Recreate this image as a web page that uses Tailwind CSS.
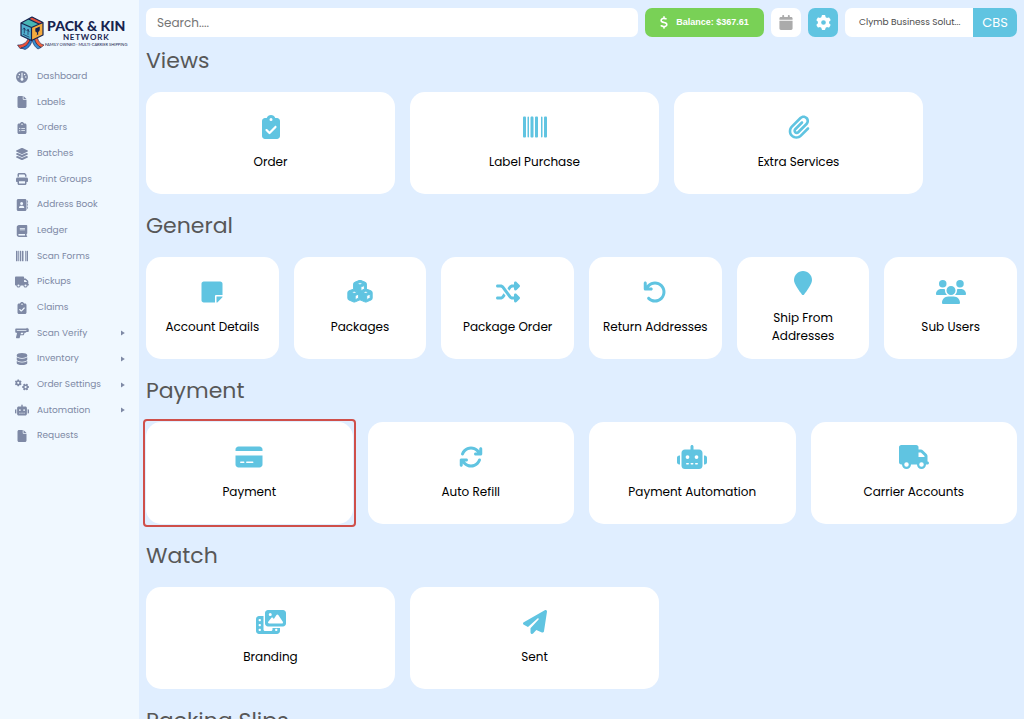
<!DOCTYPE html>
<html lang="en">
<head>
  <meta charset="UTF-8" />
  <meta name="viewport" content="width=device-width, initial-scale=1.0"/>
  <title>Settings - Pack &amp; Kin Network</title>
  <script src="https://cdn.jsdelivr.net/npm/@tailwindcss/browser@4"></script>
</head>
<body class="flex h-screen overflow-hidden bg-[#e0eeff] font-[Poppins,Inter,sans-serif] text-black">

  <!-- Icons -->
  <svg class="hidden" aria-hidden="true">
    <symbol id="gauge" viewBox="0 0 512 512"><path fill-rule="evenodd" d="M0 256a256 256 0 1 1 512 0A256 256 0 1 1 0 256zM256 416c35.3 0 64-28.7 64-64c0-26.9-16.5-49.9-40-59.3V88c0-13.3-10.7-24-24-24s-24 10.7-24 24V292.7c-23.5 9.5-40 32.5-40 59.3c0 35.3 28.7 64 64 64zM144 176a32 32 0 1 0 0-64 32 32 0 1 0 0 64zm-16 80a32 32 0 1 0 -64 0 32 32 0 1 0 64 0zm288 32a32 32 0 1 0 0-64 32 32 0 1 0 0 64zM400 144a32 32 0 1 0 -64 0 32 32 0 1 0 64 0z"/></symbol>
    <symbol id="file" viewBox="0 0 384 512"><path d="M0 64C0 28.7 28.7 0 64 0H224V128c0 17.7 14.3 32 32 32H384V448c0 35.3-28.7 64-64 64H64c-35.3 0-64-28.7-64-64V64zm384 64H256V0L384 128z"/></symbol>
    <symbol id="clipboard-list" viewBox="0 0 384 512"><path fill-rule="evenodd" d="M192 0c-41.8 0-77.4 26.7-90.5 64H64C28.7 64 0 92.7 0 128V448c0 35.3 28.7 64 64 64H320c35.3 0 64-28.7 64-64V128c0-35.3-28.7-64-64-64H282.5C269.4 26.7 233.8 0 192 0zm0 64a32 32 0 1 1 0 64 32 32 0 1 1 0-64zM72 272a24 24 0 1 1 48 0 24 24 0 1 1 -48 0zm104-16H304c8.8 0 16 7.2 16 16s-7.2 16-16 16H176c-8.8 0-16-7.2-16-16s7.2-16 16-16zM72 368a24 24 0 1 1 48 0 24 24 0 1 1 -48 0zM176 352H304c8.8 0 16 7.2 16 16s-7.2 16-16 16H176c-8.8 0-16-7.2-16-16s7.2-16 16-16z"/></symbol>
    <symbol id="clipboard-check" viewBox="0 0 384 512"><path fill-rule="evenodd" d="M192 0c-41.8 0-77.4 26.7-90.5 64H64C28.7 64 0 92.7 0 128V448c0 35.3 28.7 64 64 64H320c35.3 0 64-28.7 64-64V128c0-35.3-28.7-64-64-64H282.5C269.4 26.7 233.8 0 192 0zm0 64a32 32 0 1 1 0 64 32 32 0 1 1 0-64zM305 273L177 401c-9.4 9.4-24.6 9.4-33.9 0L79 337c-9.4-9.4-9.4-24.6 0-33.9s24.6-9.4 33.9 0l47 47L271 239c9.4-9.4 24.6-9.4 33.9 0s9.4 24.6 0 33.9z"/></symbol>
    <symbol id="layers" viewBox="0 0 576 512"><path d="M264.5 5.2c14.9-6.9 32.1-6.9 47 0l218.6 101c8.5 3.9 13.9 12.4 13.9 21.8s-5.4 17.9-13.9 21.8l-218.6 101c-14.9 6.9-32.1 6.9-47 0L45.9 149.8C37.4 145.8 32 137.3 32 128s5.4-17.9 13.9-21.8L264.5 5.2zM476.9 209.6l53.2 24.6c8.5 3.9 13.9 12.4 13.9 21.8s-5.4 17.9-13.9 21.8l-218.6 101c-14.9 6.9-32.1 6.9-47 0L45.9 277.8C37.4 273.8 32 265.3 32 256s5.4-17.9 13.9-21.8l53.2-24.6 152 70.2c23.4 10.8 50.4 10.8 73.8 0l152-70.2zm-152 198.2l152-70.2 53.2 24.6c8.5 3.9 13.9 12.4 13.9 21.8s-5.4 17.9-13.9 21.8l-218.6 101c-14.9 6.9-32.1 6.9-47 0L45.9 405.8C37.4 401.8 32 393.3 32 384s5.4-17.9 13.9-21.8l53.2-24.6 152 70.2c23.4 10.8 50.4 10.8 73.8 0z"/></symbol>
    <symbol id="print" viewBox="0 0 512 512"><path fill-rule="evenodd" d="M128 0C92.7 0 64 28.7 64 64v96h64V64H354.7L384 93.3V160h64V93.3c0-17-6.7-33.3-18.7-45.3L400 18.7C388 6.7 371.7 0 354.7 0H128zM384 352v96H128V352H384zm64 32h32c17.7 0 32-14.3 32-32V256c0-35.3-28.7-64-64-64H64c-35.3 0-64 28.7-64 64v96c0 17.7 14.3 32 32 32H64v64c0 35.3 28.7 64 64 64H384c35.3 0 64-28.7 64-64V384z"/></symbol>
    <symbol id="address-book" viewBox="0 0 512 512"><path fill-rule="evenodd" d="M96 0C60.7 0 32 28.7 32 64V448c0 35.3 28.7 64 64 64H384c35.3 0 64-28.7 64-64V64c0-35.3-28.7-64-64-64H96zM208 288h64c44.2 0 80 35.8 80 80c0 8.8-7.2 16-16 16H144c-8.8 0-16-7.2-16-16c0-44.2 35.8-80 80-80zm-32-96a64 64 0 1 1 128 0 64 64 0 1 1 -128 0zM512 80c0-8.8-7.2-16-16-16s-16 7.2-16 16v64c0 8.8 7.2 16 16 16s16-7.2 16-16V80zM496 192c-8.8 0-16 7.2-16 16v64c0 8.8 7.2 16 16 16s16-7.2 16-16V208c0-8.8-7.2-16-16-16zm16 144c0-8.8-7.2-16-16-16s-16 7.2-16 16v64c0 8.8 7.2 16 16 16s16-7.2 16-16V336z"/></symbol>
    <symbol id="book" viewBox="0 0 448 512"><path fill-rule="evenodd" d="M96 0C43 0 0 43 0 96V416c0 53 43 96 96 96H416c17.7 0 32-14.3 32-32s-14.3-32-32-32V384c17.7 0 32-14.3 32-32V32c0-17.7-14.3-32-32-32H96zm0 384H352v64H96c-17.7 0-32-14.3-32-32s14.3-32 32-32zm32-240c0-8.8 7.2-16 16-16H336c8.8 0 16 7.2 16 16s-7.2 16-16 16H144c-8.8 0-16-7.2-16-16zm16 48H336c8.8 0 16 7.2 16 16s-7.2 16-16 16H144c-8.8 0-16-7.2-16-16s7.2-16 16-16z"/></symbol>
    <symbol id="barcode" viewBox="0 0 512 512"><path d="M24 32C10.7 32 0 42.7 0 56V456c0 13.3 10.7 24 24 24H40c13.3 0 24-10.7 24-24V56c0-13.3-10.7-24-24-24H24zm88 0c-8.8 0-16 7.2-16 16V464c0 8.8 7.2 16 16 16s16-7.2 16-16V48c0-8.8-7.2-16-16-16zm72 0c-13.3 0-24 10.7-24 24V456c0 13.3 10.7 24 24 24h16c13.3 0 24-10.7 24-24V56c0-13.3-10.7-24-24-24H184zm96 0c-13.3 0-24 10.7-24 24V456c0 13.3 10.7 24 24 24h16c13.3 0 24-10.7 24-24V56c0-13.3-10.7-24-24-24H280zM448 56V456c0 13.3 10.7 24 24 24h16c13.3 0 24-10.7 24-24V56c0-13.3-10.7-24-24-24H472c-13.3 0-24 10.7-24 24zm-64-8V464c0 8.8 7.2 16 16 16s16-7.2 16-16V48c0-8.8-7.2-16-16-16s-16 7.2-16 16z"/></symbol>
    <symbol id="truck" viewBox="0 0 640 512"><path fill-rule="evenodd" d="M48 0C21.5 0 0 21.5 0 48V368c0 26.5 21.5 48 48 48H64c0 53 43 96 96 96s96-43 96-96H384c0 53 43 96 96 96s96-43 96-96h32c17.7 0 32-14.3 32-32s-14.3-32-32-32V237.3c0-17-6.7-33.3-18.7-45.3L512 114.7c-12-12-28.3-18.7-45.3-18.7H416V48c0-26.5-21.5-48-48-48H48zM416 160h50.7L544 237.3V256H416V160zM112 416a48 48 0 1 1 96 0 48 48 0 1 1 -96 0zm368-48a48 48 0 1 1 0 96 48 48 0 1 1 0-96z"/></symbol>
    <symbol id="gun" viewBox="0 0 576 512"><path fill-rule="evenodd" d="M528 56c0-13.3-10.7-24-24-24s-24 10.7-24 24v8H32C14.3 64 0 78.3 0 96V208c0 17.7 14.3 32 32 32H42c20.8 0 36.1 19.6 31 39.8L33 440.2c-2.4 9.6-.2 19.7 5.8 27.5S54.1 480 64 480h96c14.7 0 27.5-10 31-24.2L217 352H321.4c23.7 0 44.8-14.9 52.7-37.2L400.9 240H432c8.5 0 16.6-3.4 22.6-9.4L477.3 208H544c17.7 0 32-14.3 32-32V96c0-17.7-14.3-32-32-32H528V56zM321.4 304H229l16-64h105l-21 58.7c-1.1 3.2-4.2 5.3-7.6 5.3zM80 128H464c8.8 0 16 7.2 16 16s-7.2 16-16 16H80c-8.8 0-16-7.2-16-16s7.2-16 16-16z"/></symbol>
    <symbol id="database" viewBox="0 0 448 512"><path d="M448 80v48c0 44.2-100.3 80-224 80S0 172.2 0 128V80C0 35.8 100.3 0 224 0S448 35.8 448 80zM393.2 214.7c20.8-7.4 39.9-16.9 54.8-28.6V288c0 44.2-100.3 80-224 80S0 332.2 0 288V186.1c14.9 11.8 34 21.2 54.8 28.6C99.7 230.7 159.5 240 224 240s124.3-9.3 169.2-25.3zM0 346.1c14.9 11.8 34 21.2 54.8 28.6C99.7 390.7 159.5 400 224 400s124.3-9.3 169.2-25.3c20.8-7.4 39.9-16.9 54.8-28.6V432c0 44.2-100.3 80-224 80S0 476.2 0 432V346.1z"/></symbol>
    <symbol id="gear" viewBox="0 0 512 512"><path id="gear-shape" fill-rule="evenodd" d="M495.9 166.6c3.2 8.7 .5 18.4-6.4 24.6l-43.3 39.4c1.1 8.3 1.7 16.8 1.7 25.4s-.6 17.1-1.7 25.4l43.3 39.4c6.9 6.2 9.6 15.9 6.4 24.6c-4.4 11.9-9.7 23.3-15.8 34.3l-4.7 8.1c-6.6 11-14 21.4-22.1 31.2c-5.9 7.2-15.7 9.6-24.5 6.8l-55.7-17.7c-13.4 10.3-28.2 18.9-44 25.4l-12.5 57.1c-2 9.1-9 16.3-18.2 17.8c-13.8 2.3-28 3.5-42.5 3.5s-28.7-1.2-42.5-3.5c-9.2-1.5-16.2-8.7-18.2-17.8l-12.5-57.1c-15.8-6.5-30.6-15.1-44-25.4L83.1 425.9c-8.8 2.8-18.6 .3-24.5-6.8c-8.1-9.8-15.5-20.2-22.1-31.2l-4.7-8.1c-6.1-11-11.4-22.4-15.8-34.3c-3.2-8.7-.5-18.4 6.4-24.6l43.3-39.4C64.6 273.1 64 264.6 64 256s.6-17.1 1.7-25.4L22.4 191.2c-6.9-6.2-9.6-15.9-6.4-24.6c4.4-11.9 9.7-23.3 15.8-34.3l4.7-8.1c6.6-11 14-21.4 22.1-31.2c5.9-7.2 15.7-9.6 24.5-6.8l55.7 17.7c13.4-10.3 28.2-18.9 44-25.4l12.5-57.1c2-9.1 9-16.3 18.2-17.8C227.3 1.2 241.5 0 256 0s28.7 1.2 42.5 3.5c9.2 1.5 16.2 8.7 18.2 17.8l12.5 57.1c15.8 6.5 30.6 15.1 44 25.4l55.7-17.7c8.8-2.8 18.6-.3 24.5 6.8c8.1 9.8 15.5 20.2 22.1 31.2l4.7 8.1c6.1 11 11.4 22.4 15.8 34.3zM256 336a80 80 0 1 0 0-160 80 80 0 1 0 0 160z"/></symbol>
    <symbol id="gears" viewBox="0 0 640 512"><use href="#gear-shape" transform="translate(-10 0) scale(.62)"/><use href="#gear-shape" transform="translate(324 190) scale(.62) rotate(30 256 256)"/></symbol>
    <symbol id="robot" viewBox="0 0 640 512"><path fill-rule="evenodd" d="M320 0c17.7 0 32 14.3 32 32V96H472c39.8 0 72 32.2 72 72V440c0 39.8-32.2 72-72 72H168c-39.8 0-72-32.2-72-72V168c0-39.8 32.2-72 72-72H288V32c0-17.7 14.3-32 32-32zM208 384c-8.8 0-16 7.2-16 16s7.2 16 16 16h32c8.8 0 16-7.2 16-16s-7.2-16-16-16H208zm96 0c-8.8 0-16 7.2-16 16s7.2 16 16 16h32c8.8 0 16-7.2 16-16s-7.2-16-16-16H304zm96 0c-8.8 0-16 7.2-16 16s7.2 16 16 16h32c8.8 0 16-7.2 16-16s-7.2-16-16-16H400zM264 256a40 40 0 1 0 -80 0 40 40 0 1 0 80 0zm152 40a40 40 0 1 0 0-80 40 40 0 1 0 0 80zM48 224H64V416H48c-26.5 0-48-21.5-48-48V272c0-26.5 21.5-48 48-48zm544 0c26.5 0 48 21.5 48 48v96c0 26.5-21.5 48-48 48H576V224h16z"/></symbol>
    <symbol id="caret" viewBox="0 0 4 6"><path d="M0 0.4L3.8 3L0 5.6z"/></symbol>
    <symbol id="dollar" viewBox="0 0 320 512"><path d="M160 0c17.7 0 32 14.3 32 32V67.7c1.6 .2 3.1 .4 4.7 .7c.4 .1 .7 .1 1.1 .2l48 8.8c17.4 3.2 28.9 19.9 25.7 37.2s-19.9 28.9-37.2 25.7l-47.5-8.7c-31.3-4.6-58.9-1.5-78.3 6.2s-27.2 18.3-29 28.1c-2 10.7-.5 16.7 1.2 20.4c1.8 3.9 5.5 8.3 12.8 13.2c16.3 10.7 41.3 17.7 73.7 26.3l2.9 .8c28.6 7.6 63.6 16.8 89.6 33.8c14.2 9.3 27.6 21.9 35.9 39.5c8.5 17.9 10.3 37.9 6.4 59.2c-6.9 38-33.1 63.4-65.6 76.7c-13.7 5.6-28.6 9.2-44.4 11V480c0 17.7-14.3 32-32 32s-32-14.3-32-32V445.1c-.4-.1-.9-.1-1.3-.2l-.2 0c-24.4-3.8-64.5-14.3-91.5-26.3c-16.1-7.2-23.4-26.1-16.2-42.2s26.1-23.4 42.2-16.2c20.9 9.3 55.3 18.5 75.2 21.6c31.9 4.7 58.2 2 76-5.3c16.9-6.9 24.6-16.9 26.8-28.9c1.9-10.6 .4-16.7-1.3-20.4c-1.9-4-5.6-8.4-13-13.3c-16.4-10.7-41.5-17.7-74-26.3l-2.8-.7C119.4 279.3 84.4 270 58.4 253c-14.2-9.3-27.5-22-35.8-39.6c-8.4-17.9-10.1-37.9-6.1-59.2C23.7 116 52.3 91.2 84.8 78.3c13.3-5.3 27.9-8.9 43.2-11V32c0-17.7 14.3-32 32-32z"/></symbol>
    <symbol id="calendar" viewBox="0 0 448 512"><path d="M96 32V64H48C21.5 64 0 85.5 0 112v48H448V112c0-26.5-21.5-48-48-48H352V32c0-17.7-14.3-32-32-32s-32 14.3-32 32V64H160V32c0-17.7-14.3-32-32-32S96 14.3 96 32zM448 192H0V464c0 26.5 21.5 48 48 48H400c26.5 0 48-21.5 48-48V192z"/></symbol>
    <symbol id="paperclip" viewBox="0 0 448 512"><path d="M364.2 83.8c-24.4-24.4-64-24.4-88.4 0l-184 184c-42.1 42.1-42.1 110.3 0 152.4s110.3 42.1 152.4 0l152-152c10.9-10.9 28.7-10.9 39.6 0s10.9 28.7 0 39.6l-152 152c-64 64-167.6 64-231.6 0s-64-167.6 0-231.6l184-184c46.3-46.3 121.3-46.3 167.6 0s46.3 121.3 0 167.6l-176 176c-28.6 28.6-75 28.6-103.6 0s-28.6-75 0-103.6l144-144c10.9-10.9 28.7-10.9 39.6 0s10.9 28.7 0 39.6l-144 144c-6.7 6.7-6.7 17.7 0 24.4s17.7 6.7 24.4 0l176-176c24.4-24.4 24.4-64 0-88.4z"/></symbol>
    <symbol id="note" viewBox="0 0 448 512"><path d="M312 320h136V80c0-26.5-21.5-48-48-48H48C21.5 32 0 53.5 0 80v352c0 26.5 21.5 48 48 48h240V344c0-13.2 10.8-24 24-24zm129 55l-98 98c-4.5 4.5-10.6 7-17 7h-6V352h128v6.1c0 6.3-2.5 12.4-7 16.9z"/></symbol>
    <symbol id="cubes" viewBox="-24 -10 624 568"><path fill-rule="evenodd" stroke="#60c4e1" stroke-width="24" stroke-linejoin="round" d="M290.8 48.6l78.4 29.7L288 109.5 206.8 78.3l78.4-29.7c1.8-.7 3.8-.7 5.7 0zM136 92.5V204.7c-1.3 .4-2.6 .8-3.9 1.3l-96 36.4C14.4 250.6 0 271.5 0 294.7V413.9c0 22.2 13.1 42.3 33.5 51.3l96 42.2c14.4 6.3 30.7 6.3 45.1 0L288 457.5l113.5 49.9c14.4 6.3 30.7 6.3 45.1 0l96-42.2c20.3-8.9 33.5-29.1 33.5-51.3V294.7c0-23.3-14.4-44.1-36.1-52.4l-96-36.4c-1.3-.5-2.6-.9-3.9-1.3V92.5c0-23.3-14.4-44.1-36.1-52.4l-96-36.4c-12.8-4.8-26.9-4.8-39.7 0l-96 36.4C150.4 48.4 136 69.3 136 92.5zM392 210.6l-82.4 31.2V152.6L392 121v89.6zM154.8 250.9l78.4 29.7L152 311.7 70.8 280.6l78.4-29.7c1.8-.7 3.8-.7 5.7 0zm18.8 204.4V354.8L256 323.2v95.9l-82.4 36.2zM421.2 250.9c1.8-.7 3.8-.7 5.7 0l78.4 29.7L424 311.7l-81.2-31.1 78.4-29.7zM523.2 421.2l-77.6 34.1V354.8L528 323.2v90.7c0 3.2-1.9 6-4.8 7.3z"/></symbol>
    <symbol id="shuffle" viewBox="0 0 512 512"><path d="M403.8 34.4c12-5 25.7-2.2 34.9 6.9l64 64c6 6 9.4 14.1 9.4 22.6s-3.4 16.6-9.4 22.6l-64 64c-9.2 9.2-22.9 11.9-34.9 6.9s-19.8-16.6-19.8-29.6V160H352c-10.1 0-19.6 4.7-25.6 12.8L284 229.3 244 176l31.2-41.6C293.3 110.2 321.8 96 352 96h32V64c0-12.9 7.8-24.6 19.8-29.6zM164 282.7L204 336l-31.2 41.6C154.7 401.8 126.2 416 96 416H32c-17.7 0-32-14.3-32-32s14.3-32 32-32H96c10.1 0 19.6-4.7 25.6-12.8L164 282.7zm274.6 188c-9.2 9.2-22.9 11.9-34.9 6.9s-19.8-16.6-19.8-29.6V416H352c-30.2 0-58.7-14.2-76.8-38.4L121.6 172.8c-6-8.1-15.5-12.8-25.6-12.8H32c-17.7 0-32-14.3-32-32s14.3-32 32-32H96c30.2 0 58.7 14.2 76.8 38.4L326.4 339.2c6 8.1 15.5 12.8 25.6 12.8h32V320c0-12.9 7.8-24.6 19.8-29.6s25.7-2.2 34.9 6.9l64 64c6 6 9.4 14.1 9.4 22.6s-3.4 16.6-9.4 22.6l-64 64z"/></symbol>
    <symbol id="undo" viewBox="0 0 512 512"><path d="M125.7 160H176c17.7 0 32 14.3 32 32s-14.3 32-32 32H48c-17.7 0-32-14.3-32-32V64c0-17.7 14.3-32 32-32s32 14.3 32 32v51.2L97.6 97.6c87.5-87.5 229.3-87.5 316.8 0s87.5 229.3 0 316.8s-229.3 87.5-316.8 0c-12.5-12.5-12.5-32.8 0-45.3s32.8-12.5 45.3 0c62.5 62.5 163.8 62.5 226.3 0s62.5-163.8 0-226.3s-163.8-62.5-226.3 0L125.7 160z"/></symbol>
    <symbol id="pin" viewBox="0 0 384 512"><path d="M384 192c0 87.4-117 243-168.3 307.2c-12.3 15.3-35.1 15.3-47.4 0C117 435 0 279.4 0 192C0 86 86 0 192 0S384 86 384 192z"/></symbol>
    <symbol id="users" viewBox="0 0 640 512"><path d="M144 0a80 80 0 1 1 0 160A80 80 0 1 1 144 0zM512 0a80 80 0 1 1 0 160A80 80 0 1 1 512 0zM0 298.7C0 239.8 47.8 192 106.7 192h42.7c15.9 0 31 3.5 44.6 9.7c-1.3 7.2-1.9 14.7-1.9 22.3c0 38.2 16.8 72.5 43.3 96H21.3C9.6 320 0 310.4 0 298.7zM405.3 320h-.7c26.6-23.5 43.3-57.8 43.3-96c0-7.6-.7-15-1.9-22.3c13.6-6.3 28.7-9.7 44.6-9.7h42.7C592.2 192 640 239.8 640 298.7c0 11.8-9.6 21.3-21.3 21.3H405.3zM224 224a96 96 0 1 1 192 0 96 96 0 1 1-192 0zM128 485.3C128 411.7 187.7 352 261.3 352H378.7C452.3 352 512 411.7 512 485.3c0 14.7-11.9 26.7-26.7 26.7H154.7c-14.7 0-26.7-11.9-26.7-26.7z"/></symbol>
    <symbol id="credit-card" viewBox="0 0 576 512"><path fill-rule="evenodd" d="M64 32C28.7 32 0 60.7 0 96v32H576V96c0-35.3-28.7-64-64-64H64zM576 224H0V416c0 35.3 28.7 64 64 64H512c35.3 0 64-28.7 64-64V224zM112 352h64c8.8 0 16 7.2 16 16s-7.2 16-16 16H112c-8.8 0-16-7.2-16-16s7.2-16 16-16zm112 16c0-8.8 7.2-16 16-16H368c8.8 0 16 7.2 16 16s-7.2 16-16 16H240c-8.8 0-16-7.2-16-16z"/></symbol>
    <symbol id="refresh" viewBox="0 0 512 512"><path d="M105.1 202.6c7.7-21.8 20.2-42.3 37.8-59.8c62.5-62.5 163.8-62.5 226.3 0L386.3 160H352c-17.7 0-32 14.3-32 32s14.3 32 32 32H463.9c17.7 0 32-14.3 32-32V80c0-17.7-14.3-32-32-32s-32 14.3-32 32v35.2L414.4 97.6c-87.5-87.5-229.3-87.5-316.8 0C73.2 122 55.6 150.7 44.8 181.4c-5.9 16.7 2.9 34.9 19.5 40.8s34.9-2.9 40.8-19.5zM39 289.3c-5 1.5-9.8 4.2-13.7 8.2c-4 4-6.7 8.8-8.1 14c-.3 1.2-.6 2.5-.8 3.8c-.3 1.7-.4 3.4-.4 5.1V432c0 17.7 14.3 32 32 32s32-14.3 32-32V396.9l17.6 17.5c87.5 87.4 229.3 87.4 316.7 0c24.4-24.4 42.1-53.1 52.9-83.7c5.9-16.7-2.9-34.9-19.5-40.8s-34.9 2.9-40.8 19.5c-7.7 21.8-20.2 42.3-37.8 59.8c-62.5 62.5-163.8 62.5-226.3 0L125.6 352H160c17.7 0 32-14.3 32-32s-14.3-32-32-32H48.4c-1.6 0-3.2 .1-4.8 .3s-3.1 .5-4.6 1z"/></symbol>
    <symbol id="photo-film" viewBox="0 0 640 512"><path fill-rule="evenodd" d="M256 0H576c35.3 0 64 28.7 64 64V288c0 35.3-28.7 64-64 64H256c-35.3 0-64-28.7-64-64V64c0-35.3 28.7-64 64-64zM476 106.7C471.5 100 464 96 456 96s-15.5 4-20 10.7l-56 84L362.7 169c-4.6-5.7-11.5-9-18.7-9s-14.2 3.3-18.7 9l-64 80c-5.8 7.2-6.9 17.1-2.9 25.4s12.4 13.6 21.6 13.6H552c8.9 0 17-4.9 21.2-12.7s3.7-17.3-1.2-24.6l-96-144zM336 96a32 32 0 1 0 -64 0 32 32 0 1 0 64 0zM64 128h96V416c0 17.7 14.3 32 32 32H320c17.7 0 32-14.3 32-32V384H512v64c0 35.3-28.7 64-64 64H64c-35.3 0-64-28.7-64-64V192c0-35.3 28.7-64 64-64zm8 64c-8.8 0-16 7.2-16 16v16c0 8.8 7.2 16 16 16H88c8.8 0 16-7.2 16-16V208c0-8.8-7.2-16-16-16H72zm0 104c-8.8 0-16 7.2-16 16v16c0 8.8 7.2 16 16 16H88c8.8 0 16-7.2 16-16V312c0-8.8-7.2-16-16-16H72zm0 104c-8.8 0-16 7.2-16 16v16c0 8.8 7.2 16 16 16H88c8.8 0 16-7.2 16-16V416c0-8.8-7.2-16-16-16H72zm336 16v16c0 8.8 7.2 16 16 16h16c8.8 0 16-7.2 16-16V416c0-8.8-7.2-16-16-16H424c-8.8 0-16 7.2-16 16z"/></symbol>
    <symbol id="plane" viewBox="0 0 512 512"><path d="M498.1 5.6c10.1 7 15.4 19.1 13.5 31.2l-64 416c-1.5 9.7-7.4 18.2-16 23s-18.9 5.4-28 1.6L284 427.7l-68.5 74.1c-8.9 9.7-22.9 12.9-35.2 8.1S160 493.2 160 480V396.4c0-4 1.5-7.8 4.2-10.7L331.8 202.8c5.8-6.3 5.6-16-.4-22s-15.7-6.4-22-.7L106 360.8 17.7 316.6C7.1 311.3 .3 300.7 0 288.9s5.9-22.8 16.1-28.7l448-256c10.7-6.1 23.9-5.5 34 1.4z"/></symbol>
  </svg>

  <!-- Sidebar -->
  <aside class="flex w-[139px] shrink-0 flex-col bg-[#f0f8ff] pt-[15px]">
    <a href="#" class="flex items-center pl-4 text-[#17234f]">
      <svg class="h-[35px] w-[29px] shrink-0" viewBox="0 0 29 35" fill="none" stroke-linejoin="round" stroke-linecap="round">
        <path d="M12 24C10 28 7 30 1.5 30L4 33.5C9 33 12.5 30 14 25z" fill="#e8503a" stroke="#17234f" stroke-width=".6"/>
        <path d="M14 25C12 30 9 32 5 33L9 34.5C13.5 32.5 15.5 29 16 25z" fill="#2f7fd0" stroke="#17234f" stroke-width=".6"/>
        <path d="M18 24C19 28 21.5 31 25 32.5L28 30C24 29 22.5 26.5 21.5 23z" fill="#f2643d" stroke="#17234f" stroke-width=".6"/>
        <path d="M16 25C17 29.5 19.5 32.5 22 34L25 32.5C21 30.5 19.5 28 18.5 24z" fill="#3a8fd0" stroke="#17234f" stroke-width=".6"/>
        <path d="M5 8L15.5 12.5V25.5L5 20.5z" fill="#4fb0cf"/>
        <path d="M15.5 12.5L27 7.5V20L15.5 25.5z" fill="#f5ab3e"/>
        <path d="M5 8L16 2L27 7.5L15.5 12.5z" fill="#47b5b4"/>
        <path d="M13 3.6L16 2L27 7.5L23.5 9z" fill="#e8503a"/>
        <path d="M5 8L16 2L27 7.5V20L15.5 25.5L5 20.5zM5 8L15.5 12.5V25.5M15.5 12.5L27 7.5M12.5 4L23 9" stroke="#17234f" stroke-width="1.2"/>
        <path d="M8.3 18V13L7.2 14.2M8.3 13L9.4 15M12 19.5V14.5L10.9 15.7M12 14.5L13.1 16.7M7.5 19.5L13 22" stroke="#17234f" stroke-width=".7"/>
        <path d="M19.3 13.5L23.8 11.5V14.5C23.8 16 22.5 16.7 22.2 17V19.2L23.5 18.8L20 20.5L21 19.5V17.5C20 17.5 19.3 16.5 19.3 15.5z" fill="#17234f"/>
      </svg>
      <span class="flex flex-col items-center font-[Lato] font-bold whitespace-nowrap">
        <span class="text-[14px] leading-[14px] font-black">PACK &amp; KIN</span>
        <span class="text-[8px] leading-[9px] tracking-widest">NETWORK</span>
        <span class="text-[4px] leading-[5px] font-normal">FAMILY OWNED · MULTI-CARRIER SHIPPING</span>
      </span>
    </a>
    <nav class="mt-[14px] grid h-[385px] auto-rows-fr text-[9px] text-[#7e89a5]">
      <a href="#" class="flex items-center gap-2 pl-[15px]"><svg class="h-3 w-[14px] fill-current"><use href="#gauge"/></svg>Dashboard</a>
      <a href="#" class="flex items-center gap-2 pl-[15px]"><svg class="h-3 w-[14px] fill-current"><use href="#file"/></svg>Labels</a>
      <a href="#" class="flex items-center gap-2 pl-[15px]"><svg class="h-3 w-[14px] fill-current"><use href="#clipboard-list"/></svg>Orders</a>
      <a href="#" class="flex items-center gap-2 pl-[15px]"><svg class="h-3 w-[14px] fill-current"><use href="#layers"/></svg>Batches</a>
      <a href="#" class="flex items-center gap-2 pl-[15px]"><svg class="h-3 w-[14px] fill-current"><use href="#print"/></svg>Print Groups</a>
      <a href="#" class="flex items-center gap-2 pl-[15px]"><svg class="h-3 w-[14px] fill-current"><use href="#address-book"/></svg>Address Book</a>
      <a href="#" class="flex items-center gap-2 pl-[15px]"><svg class="h-3 w-[14px] fill-current"><use href="#book"/></svg>Ledger</a>
      <a href="#" class="flex items-center gap-2 pl-[15px]"><svg class="h-3 w-[14px] fill-current"><use href="#barcode"/></svg>Scan Forms</a>
      <a href="#" class="flex items-center gap-2 pl-[15px]"><svg class="h-3 w-[14px] fill-current"><use href="#truck"/></svg>Pickups</a>
      <a href="#" class="flex items-center gap-2 pl-[15px]"><svg class="h-3 w-[14px] fill-current"><use href="#clipboard-check"/></svg>Claims</a>
      <button class="flex items-center gap-2 pr-[14px] pl-[15px]"><svg class="h-3 w-[14px] fill-current"><use href="#gun"/></svg>Scan Verify<svg class="ml-auto h-[6px] w-1 fill-current"><use href="#caret"/></svg></button>
      <button class="flex items-center gap-2 pr-[14px] pl-[15px]"><svg class="h-3 w-[14px] fill-current"><use href="#database"/></svg>Inventory<svg class="ml-auto h-[6px] w-1 fill-current"><use href="#caret"/></svg></button>
      <button class="flex items-center gap-2 pr-[14px] pl-[15px]"><svg class="h-3 w-[14px] fill-current"><use href="#gears"/></svg>Order Settings<svg class="ml-auto h-[6px] w-1 fill-current"><use href="#caret"/></svg></button>
      <button class="flex items-center gap-2 pr-[14px] pl-[15px]"><svg class="h-3 w-[14px] fill-current"><use href="#robot"/></svg>Automation<svg class="ml-auto h-[6px] w-1 fill-current"><use href="#caret"/></svg></button>
      <a href="#" class="flex items-center gap-2 pl-[15px]"><svg class="h-3 w-[14px] fill-current"><use href="#file"/></svg>Requests</a>
    </nav>
  </aside>

  <!-- Main Content -->
  <main class="min-w-0 flex-1 overflow-y-auto px-[7px] pt-2 pb-8 [scrollbar-width:none]">

    <!-- Top bar -->
    <header class="flex h-[29px] gap-[7px]">
      <input type="search" aria-label="Search" placeholder="Search...." class="min-w-0 flex-1 rounded-[7px] bg-white px-[11px] text-xs placeholder:text-[#757575]" />
      <button class="flex w-[119px] items-center justify-center gap-2 rounded-[7px] bg-[#79d156] font-[Liberation_Sans] text-[9px] font-bold text-white"><svg class="h-[13px] w-2 fill-current"><use href="#dollar"/></svg>Balance: $367.61</button>
      <button aria-label="Calendar" class="flex w-[30px] items-center justify-center rounded-[7px] bg-white text-[#ababab]"><svg class="h-[15px] w-[14px] fill-current"><use href="#calendar"/></svg></button>
      <button aria-label="Settings" class="flex w-[30px] items-center justify-center rounded-[7px] bg-[#60c4e1] text-white"><svg class="h-[15px] w-[15px] fill-current"><use href="#gear"/></svg></button>
      <button class="flex overflow-hidden rounded-[7px] bg-white text-left">
        <span class="w-[128px] self-center pl-[14px] text-[9px] whitespace-nowrap text-[#4d4d4d]">Clymb Business Solut...</span>
        <span class="flex w-11 items-center justify-center self-stretch bg-[#60c4e1] text-[13px] text-white">CBS</span>
      </button>
    </header>

    <!-- Views -->
    <section>
      <h2 class="mb-2 text-[22px] leading-[47px] text-[#575757]">Views</h2>
      <div class="flex gap-[15px] text-xs leading-[18px]">
        <a href="#" class="flex h-[102px] w-full max-w-[249px] flex-col items-center justify-center gap-[14px] rounded-[15px] bg-white text-center"><svg class="h-6 w-[30px] fill-[#60c4e1]"><use href="#clipboard-check"/></svg>Order</a>
        <a href="#" class="flex h-[102px] w-full max-w-[249px] flex-col items-center justify-center gap-[14px] rounded-[15px] bg-white text-center"><svg class="h-6 w-[30px] fill-[#60c4e1]"><use href="#barcode"/></svg>Label Purchase</a>
        <a href="#" class="flex h-[102px] w-full max-w-[249px] flex-col items-center justify-center gap-[14px] rounded-[15px] bg-white text-center"><svg class="h-6 w-[30px] fill-[#60c4e1]"><use href="#paperclip"/></svg>Extra Services</a>
      </div>
    </section>

    <!-- General -->
    <section class="mt-2">
      <h2 class="mb-2 text-[22px] leading-[47px] text-[#575757]">General</h2>
      <div class="grid grid-cols-6 gap-[15px] text-xs leading-[18px]">
        <a href="#" class="flex h-[102px] flex-col items-center justify-center gap-[14px] rounded-[15px] bg-white px-3 text-center"><svg class="h-6 w-[30px] fill-[#60c4e1]"><use href="#note"/></svg>Account Details</a>
        <a href="#" class="flex h-[102px] flex-col items-center justify-center gap-[14px] rounded-[15px] bg-white px-3 text-center"><svg class="h-6 w-[30px] fill-[#60c4e1]"><use href="#cubes"/></svg>Packages</a>
        <a href="#" class="flex h-[102px] flex-col items-center justify-center gap-[14px] rounded-[15px] bg-white px-3 text-center"><svg class="h-6 w-[30px] fill-[#60c4e1]"><use href="#shuffle"/></svg>Package Order</a>
        <a href="#" class="flex h-[102px] flex-col items-center justify-center gap-[14px] rounded-[15px] bg-white px-3 text-center"><svg class="h-6 w-[30px] fill-[#60c4e1]"><use href="#undo"/></svg>Return Addresses</a>
        <a href="#" class="flex h-[102px] flex-col items-center justify-center gap-[14px] rounded-[15px] bg-white px-3 text-center"><svg class="h-6 w-[30px] fill-[#60c4e1]"><use href="#pin"/></svg><span>Ship From<br>Addresses</span></a>
        <a href="#" class="flex h-[102px] flex-col items-center justify-center gap-[14px] rounded-[15px] bg-white px-3 text-center"><svg class="h-6 w-[30px] fill-[#60c4e1]"><use href="#users"/></svg>Sub Users</a>
      </div>
    </section>

    <!-- Payment -->
    <section class="mt-2">
      <h2 class="mb-2 text-[22px] leading-[47px] text-[#575757]">Payment</h2>
      <div class="grid grid-cols-4 gap-[15px] text-xs leading-[18px]">
        <a href="#" class="relative flex h-[102px] flex-col items-center justify-center gap-[14px] rounded-[15px] bg-white text-center">
          <span class="absolute -inset-[3px] rounded-[4px] border-2 border-[#cf4f4a]"></span>
          <svg class="h-6 w-[30px] fill-[#60c4e1]"><use href="#credit-card"/></svg>Payment
        </a>
        <a href="#" class="flex h-[102px] flex-col items-center justify-center gap-[14px] rounded-[15px] bg-white text-center"><svg class="h-6 w-[30px] fill-[#60c4e1]"><use href="#refresh"/></svg>Auto Refill</a>
        <a href="#" class="flex h-[102px] flex-col items-center justify-center gap-[14px] rounded-[15px] bg-white text-center"><svg class="h-6 w-[30px] fill-[#60c4e1]"><use href="#robot"/></svg>Payment Automation</a>
        <a href="#" class="flex h-[102px] flex-col items-center justify-center gap-[14px] rounded-[15px] bg-white text-center"><svg class="h-6 w-[30px] fill-[#60c4e1]"><use href="#truck"/></svg>Carrier Accounts</a>
      </div>
    </section>

    <!-- Watch -->
    <section class="mt-2">
      <h2 class="mb-2 text-[22px] leading-[47px] text-[#575757]">Watch</h2>
      <div class="flex gap-[15px] text-xs leading-[18px]">
        <a href="#" class="flex h-[102px] w-full max-w-[249px] flex-col items-center justify-center gap-[14px] rounded-[15px] bg-white text-center"><svg class="h-6 w-[30px] fill-[#60c4e1]"><use href="#photo-film"/></svg>Branding</a>
        <a href="#" class="flex h-[102px] w-full max-w-[249px] flex-col items-center justify-center gap-[14px] rounded-[15px] bg-white text-center"><svg class="h-6 w-[30px] fill-[#60c4e1]"><use href="#plane"/></svg>Sent</a>
      </div>
    </section>

    <!-- Packing Slips -->
    <section class="mt-2">
      <h2 class="mb-2 text-[22px] leading-[47px] text-[#575757]">Packing Slips</h2>
    </section>

  </main>

</body>
</html>
